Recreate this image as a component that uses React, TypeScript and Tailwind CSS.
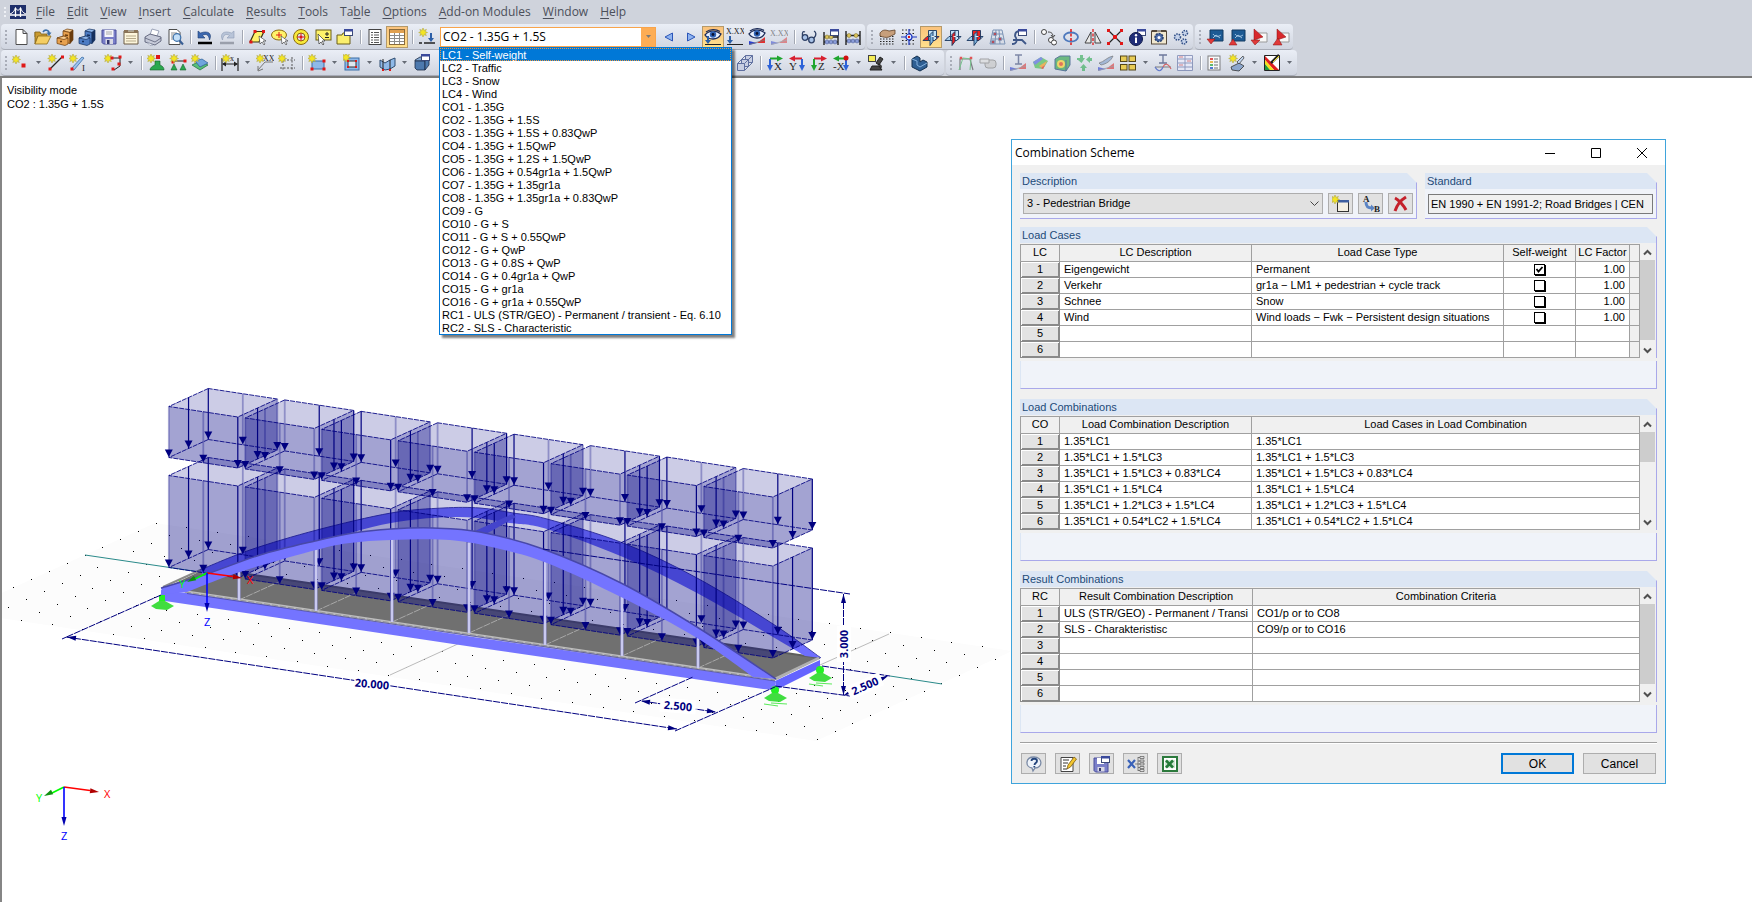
import { useState } from 'react'
import type { ReactNode } from 'react'

const MENUS: [string, number][] = [
  ['File', 0],
  ['Edit', 0],
  ['View', 0],
  ['Insert', 0],
  ['Calculate', 0],
  ['Results', 0],
  ['Tools', 0],
  ['Table', 2],
  ['Options', 0],
  ['Add-on Modules', 0],
  ['Window', 0],
  ['Help', 0],
]

const LOADINGS = [
  'LC1 - Self-weight',
  'LC2 - Traffic',
  'LC3 - Snow',
  'LC4 - Wind',
  'CO1 - 1.35G',
  'CO2 - 1.35G + 1.5S',
  'CO3 - 1.35G + 1.5S + 0.83QwP',
  'CO4 - 1.35G + 1.5QwP',
  'CO5 - 1.35G + 1.2S + 1.5QwP',
  'CO6 - 1.35G + 0.54gr1a + 1.5QwP',
  'CO7 - 1.35G + 1.35gr1a',
  'CO8 - 1.35G + 1.35gr1a + 0.83QwP',
  'CO9 - G',
  'CO10 - G + S',
  'CO11 - G + S + 0.55QwP',
  'CO12 - G + QwP',
  'CO13 - G + 0.8S + QwP',
  'CO14 - G + 0.4gr1a + QwP',
  'CO15 - G + gr1a',
  'CO16 - G + gr1a + 0.55QwP',
  'RC1 - ULS (STR/GEO) - Permanent / transient - Eq. 6.10',
  'RC2 - SLS - Characteristic',
]

/* ---------- icons ---------- */

const Star = ({ x = 0, y = 0 }: { x?: number; y?: number }) => (
  <g transform={`translate(${x} ${y})`}>
    <path d="M4 0l1 2.4 2.4-1L6.200 3.500 8.500 4.500 6.200 5.300 7.300 7.500 5 6.600 4 9 3 6.600.8 7.500 1.900 5.300-.3 4.500 1.900 3.500.8 1.400 3 2.400z" fill="#f3e522" stroke="#b3a83c" strokeWidth=".6" />
  </g>
)

const Node = ({ x, y, s = 3 }: { x: number; y: number; s?: number }) => (
  <rect x={x - s / 2} y={y - s / 2} width={s} height={s} fill="#e01818" />
)

const Win = ({ x, y }: { x: number; y: number }) => (
  <g>
    <rect x={x + 0.5} y={y + 0.5} width="8" height="6" fill="#fff" stroke="#3b4a78" />
    <rect x={x} y={y} width="9" height="2.500" fill="#3b4a9c" />
  </g>
)

const Glyph = ({ x, y, children, size = 9, fill = '#222' }: { x: number; y: number; children: ReactNode; size?: number; fill?: string }) => (
  <text x={x} y={y} fontSize={size} fill={fill} fontFamily="Liberation Serif, serif">
    {children}
  </text>
)

const Cube = ({ fill, light }: { fill: string; light: string }) => (
  <g stroke="#1c2c48" strokeWidth=".8">
    <path d="M2 6l5-3h9l-4 4H2z" fill={light} />
    <path d="M2 7h10v9H4l-2-2z" fill={fill} />
    <path d="M12 7l4-4v8l-4 5z" fill={fill} />
  </g>
)

const Cabinet = ({ fill, light, dark }: { fill: string; light: string; dark: string }) => (
  <g stroke={dark} strokeWidth=".7">
    <path d="M7 3l4-2 6 1-3 2.500z" fill={light} />
    <path d="M7 3l7 1.500v11L7 14z" fill={fill} />
    <path d="M14 4.500L17 2v10l-3 3.500z" fill={dark} />
    <path d="M1 10l7-2 4 2v6l-3 1.500-8-2z" fill={fill} />
    <path d="M1 10l7-2 4 2-4 1.500z" fill={light} />
    <path d="M9 7l3 .5M4 13.500h2" stroke={dark} strokeWidth="1.300" />
  </g>
)

const Planes = ({ red }: { red: number }) => (
  <g stroke="#17365f" strokeWidth=".9">
    <path d="M6.500 2.500h8v8h-8z" fill={red === 2 ? '#ee2222' : '#c3e2f8'} />
    <path d="M1 12.500l4-4h12l-4 4z" fill={red === 0 ? '#ee2222' : '#a4cdec'} />
    <path d="M6.500 8.500h8v2l-2 2h-6z" fill={red === 2 ? '#ee2222' : '#c3e2f8'} />
    <path d="M8 6.500l3-3v10l-3 4z" fill={red === 1 ? '#ee2222' : '#7fb4de'} />
    <path d="M9.500 8.500h3" stroke="#fff" />
  </g>
)

const Axes = ({ label, a, b, flip }: { label: string; a: string; b: string; flip?: boolean }) => (
  <g>
    <g transform={flip ? 'translate(18 0) scale(-1 1)' : undefined}>
      <path d="M4 4.500h8" stroke={a} strokeWidth="2" />
      <path d="M11 1.500l6 3-6 3z" fill={a} />
      <path d="M4 5v7" stroke={b} strokeWidth="2" />
      <path d="M1 11h6l-3 6z" fill={b} />
    </g>
    <Glyph x={flip ? 1 : 8} y={16} size={11}>{label}</Glyph>
  </g>
)

const Eye = ({ y = 0 }: { y?: number }) => (
  <g transform={`translate(0 ${y})`}>
    <path d="M1 6c4-5 11-5 16-1-2 4-4 5-8 5-3 0-6-1-8-4z" fill="#e8f0ff" stroke="#1c2b58" strokeWidth="1.300" />
    <circle cx="9" cy="5.500" r="3.200" fill="#2f62b5" />
    <circle cx="9" cy="5.500" r="1.400" fill="#0b1230" />
    <path d="M2 3c4-3 10-3 14-.5" fill="none" stroke="#1c2b58" strokeWidth="1.300" />
  </g>
)

const Slope = () => (
  <g>
    <path d="M1 17v-4l8 2z" fill="#2b3fd0" />
    <path d="M9 15l8-6v6z" fill="#e03030" />
    <path d="M1 16.500L17 12" stroke="#777" strokeWidth=".8" />
  </g>
)

const ICONS: Record<string, ReactNode> = {
  New: <path d="M4 1.500h7l4 4v11H4zM11 1.500v4h4" fill="#fff" stroke="#4d4d4d" />,
  Open: (
    <>
      <path d="M1 4h5l1 2h6v3H1z" fill="#c99a2f" stroke="#7d5f16" strokeWidth=".8" />
      <path d="M1 4v12l3-8" fill="#c99a2f" stroke="#7d5f16" strokeWidth=".8" />
      <path d="M1 16L4 8h13l-4 8z" fill="#f5ce63" stroke="#8a6a1a" strokeWidth=".8" />
      <path d="M9 4c2-3 6-2 6 1" fill="none" stroke="#3b6ea8" strokeWidth="1.600" />
      <path d="M12.500 4.500h5L15 8z" fill="#3b6ea8" />
    </>
  ),
  Library: <Cabinet fill="#e8a14e" light="#f9cc8e" dark="#6a3b0c" />,
  'Project manager': <Cabinet fill="#4d7cc4" light="#8fb6ea" dark="#16305f" />,
  Save: (
    <>
      <path d="M2 2h14v14H3.500L2 14.500z" fill="#7a7fc9" stroke="#4a4f9a" />
      <rect x="4.500" y="2" width="9" height="7" fill="#f5f5fa" />
      <path d="M6 4h6M6 6h6" stroke="#aaa" />
      <rect x="5.500" y="11" width="7.500" height="5" fill="#d8d8e4" />
      <rect x="7" y="12" width="2.500" height="4" fill="#33386e" />
    </>
  ),
  Clipboard: (
    <>
      <path d="M2 3h14v13H2z" fill="#fdf6dc" stroke="#6a5a44" />
      <path d="M2 2h4v2h6V2h4v3H2z" fill="#8a7458" />
      <path d="M4 8h10M4 10.500h10M4 13h10" stroke="#b6a98a" />
    </>
  ),
  Print: (
    <>
      <path d="M6 7L8 1l7 2-2 5z" fill="#fff" stroke="#8890a8" strokeWidth=".8" />
      <path d="M1 9l5-3 11 3v4l-6 4L1 14z" fill="#c7cbd9" stroke="#5b6077" strokeWidth=".9" />
      <path d="M1 10l10 4 6-4" fill="none" stroke="#5b6077" strokeWidth=".8" />
      <path d="M3 14l6 3-3 .5z" fill="#fff" stroke="#8890a8" strokeWidth=".6" />
    </>
  ),
  Preview: (
    <>
      <path d="M3 1.500h8l3 3v12H3z" fill="#fff" stroke="#4d4d4d" />
      <path d="M5 5h6M5 7h3M5 9h2M5 11h2" stroke="#8a8a8a" />
      <circle cx="11" cy="9.500" r="3.800" fill="#bcdcf7" fillOpacity=".9" stroke="#3a6ea8" strokeWidth="1.200" />
      <path d="M13.500 12.500l3.500 4" stroke="#3a5f95" strokeWidth="2" />
    </>
  ),
  Undo: (
    <>
      <path d="M2 3v7h7L6.500 7.500C10 5 13 7 13.500 12c3-6-1-10-9-7z" fill="#3c68b0" stroke="#1d3c70" strokeWidth=".6" />
      <path d="M2 15h14" stroke="#000" strokeWidth="2.500" />
    </>
  ),
  Redo: (
    <>
      <path d="M16 3v7H9l2.500-2.500C8 5 5 7 4.500 12c-3-6 1-10 9-7z" fill="#b8c4d8" stroke="#8f9cb5" strokeWidth=".6" />
      <path d="M2 15h14" stroke="#9a9fab" strokeWidth="2.500" />
    </>
  ),
  'Select rhomboid': (
    <>
      <path d="M7 3.500h9L11 14H2z" fill="#fff36a" stroke="#3a3210" strokeWidth="1.200" />
      <Node x={7} y={3.500} /><Node x={15.500} y={3.500} /><Node x={3} y={14} />
      <path d="M11 8l1 8 2-2 2 3 1-1-2-3h3z" fill="#fff" stroke="#333" strokeWidth=".6" />
    </>
  ),
  'Select ellipse': (
    <>
      <ellipse cx="9" cy="7" rx="7.500" ry="5" fill="#fff36a" stroke="#8a6a10" />
      <path d="M9 4v6M6 7h6" stroke="#e01818" />
      <path d="M11 8l1 8 2-2 2 3 1-1-2-3h3z" fill="#fff" stroke="#333" strokeWidth=".6" />
    </>
  ),
  'Select ring': (
    <>
      <circle cx="9" cy="9" r="7.500" fill="#f8e93a" stroke="#8a6a10" />
      <circle cx="9" cy="9" r="4" fill="#dfe3ec" stroke="#8a6a10" />
      <path d="M9 5v8M5 9h8" stroke="#e01818" />
      <Node x={9} y={9} s={2.500} />
    </>
  ),
  'Select add': (
    <>
      <rect x="2" y="2" width="15" height="10" fill="#fff36a" stroke="#6b5f1a" />
      <path d="M11 6h4M13 4v4M11 9.500h4" stroke="#222" />
      <path d="M4 6l1 10 2-2 2 3 1-1-2-3h3z" fill="#fff" stroke="#333" strokeWidth=".7" />
    </>
  ),
  'Select special': (
    <>
      <path d="M1 7h5l1-2h7v11H1z" fill="#fbef6e" stroke="#6b5f1a" />
      <Win x={8} y={1} />
    </>
  ),
  'Table list': (
    <>
      <rect x="3" y="1.500" width="12" height="15" fill="#fff" stroke="#444" />
      <path d="M5 4.500h2M5 7h2M5 9.500h2M5 12h2M5 14.500h2M8 4.500h5M8 7h5M8 9.500h5M8 12h5M8 14.500h5" stroke="#555" strokeWidth="1" />
    </>
  ),
  Tables: (
    <>
      <rect x="1.500" y="1.500" width="15" height="15" fill="#fff" stroke="#8a6b3c" />
      <rect x="2" y="2" width="14" height="3" fill="#e0a050" />
      <path d="M2 7.500h14M2 10.500h14M2 13.500h14M6.500 5v11M11.500 5v11" stroke="#8b8b8b" />
    </>
  ),
  'New load': (
    <>
      <Star x={1} />
      <path d="M13 5v6" stroke="#2b5ea8" strokeWidth="2" />
      <path d="M10 10h6l-3 4z" fill="#2b5ea8" />
      <path d="M1 15h3M6 15h11" stroke="#222" strokeWidth="1.500" />
    </>
  ),
  Previous: <path d="M12.500 5v8L5 9z" fill="#8fb4f0" stroke="#2b55b8" />,
  Next: <path d="M5.500 5v8L13 9z" fill="#8fb4f0" stroke="#2b55b8" />,
  'Show loads': (
    <>
      <Eye y={1} />
      <path d="M4 8v6" stroke="#2b5ea8" strokeWidth="2" />
      <path d="M1 12h6l-3 4z" fill="#2b5ea8" />
      <path d="M1 16.500h16" stroke="#222" />
    </>
  ),
  'Show load values': (
    <>
      <Glyph x={0} y={6} size={8}>X.XX</Glyph>
      <path d="M4 8v6" stroke="#2b5ea8" strokeWidth="2" />
      <path d="M1 12h6l-3 4z" fill="#2b5ea8" />
      <path d="M1 16.500h16" stroke="#222" />
    </>
  ),
  'Show results': <><Eye /><Slope /></>,
  'Show result values': <g opacity=".5"><Glyph x={0} y={8} size={8}>X.XX</Glyph><Slope /></g>,
  Glasses: (
    <g fill="#a9c3e8" stroke="#2e4066" strokeWidth="1.300">
      <circle cx="5" cy="9.500" r="2.800" /><circle cx="11.500" cy="12" r="2.800" />
      <path d="M2.500 8C2 4 3 3 5 4M14 10c3-3 2-6 0-7M7.500 10.500l1.500.5" fill="none" />
    </g>
  ),
  'Abacus window': (
    <>
      <path d="M2 4v13M16 4v13M2 9h14M2 14h14" stroke="#222" strokeWidth="1.400" />
      <g fill="#d9c25c" stroke="#75651e" strokeWidth=".5"><circle cx="5" cy="9" r="2" /><circle cx="9" cy="9" r="2" /></g>
      <g fill="#8a9cd8" stroke="#44558f" strokeWidth=".5"><circle cx="5" cy="14" r="2" /><circle cx="9" cy="14" r="2" /><circle cx="13" cy="14" r="2" /></g>
      <Win x={8} y={1} />
    </>
  ),
  Abacus: (
    <>
      <path d="M2 3v14M16 3v14M2 7.500h14M2 13h14" stroke="#222" strokeWidth="1.400" />
      <g fill="#d9c25c" stroke="#75651e" strokeWidth=".5"><circle cx="5" cy="7.500" r="2" /><circle cx="12" cy="7.500" r="2" /></g>
      <g fill="#8a9cd8" stroke="#44558f" strokeWidth=".5"><circle cx="5" cy="13" r="2" /><circle cx="9" cy="13" r="2" /><circle cx="13" cy="13" r="2" /></g>
    </>
  ),
  'Move grid': (
    <>
      <path d="M2 8.500h14M2 11h14M2 13.500h14M2 16h14" stroke="#222" strokeWidth="1" strokeDasharray="1.500 1.500" />
      <path d="M2 5c3-4 6-3 9-2l6-1v4l-6 3c-3 1-6 0-9-1z" fill="#c79f7b" stroke="#5f4229" strokeWidth=".8" />
    </>
  ),
  Snap: (
    <>
      <path d="M2 2h14M2 5.500h14M2 12.500h14M2 16h14" stroke="#222" strokeDasharray="1.500 2" />
      <path d="M9 1v16M1 9h16" stroke="#1a35c0" strokeWidth="1.200" />
      <circle cx="9" cy="9" r="3" fill="#dfe6fa" stroke="#1a35c0" strokeWidth="1.200" />
      <Node x={9} y={9} s={2} />
    </>
  ),
  'Plane XY': <Planes red={0} />,
  'Plane YZ': <Planes red={1} />,
  'Plane XZ': <Planes red={2} />,
  'Plane grid': (
    <g fill="none" stroke="#7b93b5">
      <path d="M5 2h9l3 14H2zM8 2L7 16M11 2l1 14M4 6h11M3 11h13" />
      <Node x={7} y={6} s={2.500} /><Node x={12} y={11} s={2.500} /><Node x={5} y={14} s={2.500} />
    </g>
  ),
  'Guide window': (
    <>
      <path d="M2 16c6 0 5-5 3-8 0-4 3-5 5-5M3 12h9l4 4" fill="none" stroke="#3e5788" strokeWidth="1.800" />
      <Win x={8} y={1} />
    </>
  ),
  Copy: (
    <g fill="#fff" stroke="#444">
      <circle cx="4" cy="4" r="2.500" /><circle cx="11" cy="12" r="2.500" /><circle cx="14" cy="14.500" r="2.500" />
      <path d="M8 4c4 0 5 2 5 5M11 7l2 2.500L15 7" fill="none" />
    </g>
  ),
  Rotate: (
    <>
      <ellipse cx="9" cy="9" rx="7" ry="4.500" fill="none" stroke="#4e79bd" strokeWidth="1.800" />
      <path d="M9 1v16" stroke="#e01818" strokeWidth="1.500" strokeDasharray="3 1.500" />
    </>
  ),
  Mirror: (
    <>
      <path d="M7 4v11H1zM11 4v11h6z" fill="#e9e9e9" stroke="#444" />
      <path d="M9 1v16" stroke="#e01818" strokeWidth="1.300" strokeDasharray="3 1.500" />
    </>
  ),
  Divide: (
    <>
      <path d="M2 2l14 14M16 2L2 16" stroke="#222" strokeWidth="1.200" />
      <Node x={2.500} y={2.500} /><Node x={15.500} y={2.500} /><Node x={2.500} y={15.500} /><Node x={15.500} y={15.500} /><Node x={9} y={9} s={4} />
    </>
  ),
  Info: (
    <>
      <Win x={9} y={1} />
      <circle cx="8" cy="11" r="6.500" fill="#1f2d78" stroke="#0f1a4a" />
      <path d="M8 9.500V15" stroke="#fff" strokeWidth="2" /><circle cx="8" cy="7.200" r="1.200" fill="#fff" />
    </>
  ),
  Settings: (
    <>
      <rect x="1.500" y="3" width="15" height="13" fill="#f1e8cf" stroke="#54493a" />
      <path d="M2 2h5v2H2zM11 2h5v2h-5z" fill="#54493a" />
      <circle cx="9" cy="9.500" r="4" fill="#4a6aa8" stroke="#27406f" strokeDasharray="2 1" strokeWidth="1.500" /><circle cx="9" cy="9.500" r="1.500" fill="#fff" />
    </>
  ),
  Gears: (
    <g fill="#c6d3ea" stroke="#2f4d85" strokeDasharray="1.500 1" strokeWidth="1.500">
      <circle cx="5.500" cy="9" r="3" /><circle cx="13" cy="5" r="2.500" /><circle cx="12" cy="13.500" r="2.500" />
    </g>
  ),
  'View down': <><path d="M4 2h13v11H4z" fill="#1d5a94" stroke="#123a62" /><path d="M7 6c2 3 5 3 8 1M7 10l3-3 4 3" fill="none" stroke="#bcd9f2" strokeWidth=".8" /><path d="M1 11h8l-4 5z" fill="#e03a3a" stroke="#8a1212" strokeWidth=".5" /></>,
  'View up': <><path d="M4 2h13v11H4z" fill="#1d5a94" stroke="#123a62" /><path d="M7 6c2 3 5 3 8 1M7 10l3-3 4 3" fill="none" stroke="#bcd9f2" strokeWidth=".8" /><path d="M1 17h8l-4-6z" fill="#e03a3a" stroke="#8a1212" strokeWidth=".5" /></>,
  'Pdf down': <><path d="M7 5h10v9H7z" fill="#f8f8f8" stroke="#999" /><path d="M4 1l9 8-9 3z" fill="#d8282c" stroke="#8a1212" strokeWidth=".5" /><path d="M1 12h9l-5 5z" fill="#e03a3a" stroke="#8a1212" strokeWidth=".5" /></>,
  'Pdf up': <><path d="M7 5h10v9H7z" fill="#f8f8f8" stroke="#999" /><path d="M5 1l9 8-9 3z" fill="#d8282c" stroke="#8a1212" strokeWidth=".5" /><path d="M1 17h9l-4-7z" fill="#e03a3a" stroke="#8a1212" strokeWidth=".5" /></>,

  'New node': <><Star x={0} y={1} /><Node x={11.500} y={11.500} s={4} /></>,
  'New line': <><path d="M3 15L15 3" stroke="#222" strokeWidth="1.300" /><Star x={1} /><Node x={3} y={15} /><Node x={15.500} y={3} /></>,
  'New member': <><path d="M2 15L13 3l2 1L5 16z" fill="#9cc3ee" stroke="#3b6ea8" strokeWidth=".8" /><Star x={0} /><Node x={3} y={15} /><Glyph x={13} y={17}>I</Glyph></>,
  'New polyline': <><path d="M8 4h8v8l-6 4" fill="none" stroke="#222" /><Star /><Node x={8} y={4} /><Node x={16} y={3} /><Node x={15} y={10} /><Node x={9} y={15} /></>,
  'Nodal support': <><Node x={11} y={3} s={4} /><path d="M8 7h5v4c3 1 4 3 4 5H3c0-2 2-4 5-5z" fill="#2aa84f" stroke="#14602a" strokeWidth=".6" /><Star /></>,
  'Line support': <><path d="M4 7h12" stroke="#222" /><Node x={4} y={8} /><Node x={16} y={7} /><path d="M5 10l3 6H2zM14 10l3 6h-6z" fill="#2aa84f" stroke="#14602a" strokeWidth=".6" /><Star x={1} /></>,
  'Surface support': <><path d="M1 11l8-4 8 4-8 5z" fill="#56c07a" stroke="#1c6f39" strokeWidth=".7" /><path d="M4 7l7-2 6 4-8 4z" fill="#6fa5de" stroke="#2a5c94" strokeWidth=".7" /><Star /></>,
  Dimension: <><path d="M1 4v13M17 4v13M2 10h14" stroke="#222" strokeWidth="1.200" /><path d="M1 10l4-2.500v5zM17 10l-4-2.500v5z" fill="#222" /><Glyph x={9} y={7} size={8}>x</Glyph><Star x={1} y={0} /></>,
  Comment: <><path d="M17 8H9l-7 8M2 12v5l5-2" fill="none" stroke="#777" /><Glyph x={7} y={7} size={8}>XX</Glyph><Star x={0} /></>,
  'Guide lines': <><path d="M5 3v14M14 3v14M2 6h15M2 14h15" fill="none" stroke="#555" strokeDasharray="2 1.500" /><Star /></>,
  'New surface': <><rect x="4" y="7" width="12" height="8" fill="#8fb9e8" stroke="#3b6ea8" /><Star /><Node x={4} y={15} /><Node x={16} y={15} /><Node x={16} y={7} /></>,
  Opening: <><rect x="2" y="4" width="14" height="12" fill="#8fb9e8" stroke="#3b6ea8" /><rect x="5" y="7" width="8" height="6" fill="#dfe6f0" stroke="#333" /><Star x={-1} y={-1} /><Node x={5} y={7} s={2} /><Node x={13} y={7} s={2} /><Node x={5} y={13} s={2} /><Node x={13} y={13} s={2} /></>,
  'Result surface': <><path d="M2 6l5 3 5-3 5-2v8l-5 3-5 1-5-3z" fill="#8fb9e8" stroke="#2f4d70" /><path d="M5 5v10M12 6v9" stroke="#222" /><Node x={5} y={16} s={2} /><Node x={12} y={16} s={2} /></>,
  Solid: <><Cube fill="#4d79ae" light="#86aad3" /><Win x={8} y={0} /></>,
  Isometric: (
    <g fill="#c8cfe3" stroke="#6070a0">
      <path d="M9.500 1.500h7v7h-7z" />
      <path d="M5.500 5.500h7v7h-7z" />
      <path d="M1.500 9.500h7v7h-7z" />
      <path d="M1.500 9.500l8-8M8.500 9.500l8-8M8.500 16.500l8-8" fill="none" />
    </g>
  ),
  'View X': <Axes label="X" a="#1fa62f" b="#2c62d8" />,
  'View Y': <Axes label="Y" a="#d82030" b="#2c62d8" flip />,
  'View Z': <Axes label="Z" a="#d82030" b="#1fa62f" />,
  'View -X': <><Axes label="-X" a="#1fa62f" b="#2c62d8" flip /><circle cx="14" cy="4" r="2.500" fill="#d01010" /></>,
  Rendering: <><rect x="1.500" y="1.500" width="7" height="6" fill="#f6ee57" stroke="#444" /><path d="M13 3l3 2-4 6-3-2zM5 12h7l3 4H3zM11 10c4 0 4 4 2 5" fill="#444" stroke="#222" /></>,
  Clipping: <><path d="M2 5l5-3 3 2v4l3-2 4 2v5l-7 4-8-4z" fill="#2f5f93" stroke="#14304f" /><path d="M2 5l5 2v4l3 2 7-4" fill="none" stroke="#86b2de" /></>,
  Deformation: <g opacity=".7"><path d="M3 16V5h10l3 11" fill="none" stroke="#555" strokeWidth="1.200" /><path d="M2 16L6 4l8 1-1 11" fill="none" stroke="#4fb868" /><Node x={4} y={4} s={2.500} /><Node x={14} y={4} s={2.500} /></g>,
  Stress: <g opacity=".7"><rect x="6" y="6" width="11" height="8" rx="3" fill="#c9c9c9" stroke="#888" /><path d="M1 5h9v4H1z" fill="#ddd" stroke="#888" /></g>,
  Internal: <g opacity=".6"><Slope /><path d="M6 1h7M9.500 1v9M6 10h7" stroke="#3b4a78" strokeWidth="1.500" /></g>,
  'Surface results': <g opacity=".8"><path d="M2 8l8-5 7 4-5 8-8-1z" fill="#62c56b" /><path d="M2 8l8-5 2 2-8 6z" fill="#6b7ce0" /><path d="M8 12l8-5-4 8z" fill="#f0a53c" /><path d="M10 14l4-3-2 4z" fill="#e04545" /></g>,
  'Solid results': <g opacity=".8"><path d="M2 5l5-3h10v9l-4 6-11-2z" fill="#4fae66" stroke="#3b5d88" /><circle cx="8" cy="10" r="4" fill="#f3d34a" /><circle cx="8" cy="10" r="2" fill="#e25a3a" /><path d="M13 6v11" stroke="#3b5d88" /></g>,
  Reactions: <g opacity=".6" fill="#2aa84f"><path d="M7 17v-3H5l3.500-4 3.500 4h-2v3zM17 7h-2v2l-4-3.500L15 2v2h2zM2 4h3V1h3v3h2L6.500 9 3 6H2z" /></g>,
  Sections: <g opacity=".6"><path d="M2 9c5-1 8-6 14-7-2 5-7 8-12 9z" fill="#7d9cc8" stroke="#333" strokeWidth=".7" /><Slope /></g>,
  Windows: (
    <g fill="#e8cc55" stroke="#54471a">
      <rect x="1.500" y="2" width="6.500" height="5.500" /><rect x="10" y="2" width="6.500" height="5.500" />
      <rect x="1.500" y="10.500" width="6.500" height="5.500" /><rect x="10" y="10.500" width="6.500" height="5.500" />
    </g>
  ),
  'Beam results': <g opacity=".7"><path d="M5 1h8M9 1v8M5 9h8" stroke="#3b4a78" strokeWidth="1.300" /><path d="M1 13h16" stroke="#555" /><path d="M1 13c3 5 6 5 8 0" fill="none" stroke="#3050c0" strokeWidth="1.200" /><path d="M9 13c2-4 5-4 8 2" fill="none" stroke="#d03030" strokeWidth="1.200" /></g>,
  'Result table': <g opacity=".6"><path d="M1.500 1.500h15v15h-15zM9 1v16M1 5h16M1 9h16M1 13h16" fill="#eef" stroke="#5b6ba0" /><path d="M3 3h4M11 7h4M3 11h4" stroke="#d04040" /></g>,
  Legend: <g opacity=".8"><rect x="2" y="2" width="12" height="14" fill="#fff" stroke="#666" /><path d="M4 5h3" stroke="#e03030" strokeWidth="2" /><path d="M4 8h3" stroke="#f0b030" strokeWidth="2" /><path d="M4 11h3" stroke="#40b050" strokeWidth="2" /><path d="M4 14h3" stroke="#3060d0" strokeWidth="2" /><path d="M8 5h4M8 8h4M8 11h4M8 14h4" stroke="#555" /></g>,
  'Smooth results': <><path d="M3 13l8-4 5 3-5 5-7-1z" fill="#8ca6cc" stroke="#333" strokeWidth=".8" /><path d="M9 8l6-6 1 2-5 6z" fill="#c0d4ee" stroke="#333" strokeWidth=".7" /><Star x={1} /></>,
  'Color scale': (
    <>
      <path d="M1.500 1.500h15v15h-15z" fill="#fff" stroke="#222" />
      <path d="M2 2l14 14h-5L2 6z" fill="#e02020" />
      <path d="M2 6l9 10H7l-5-6z" fill="#f4e11b" />
      <path d="M2 10l5 6H2z" fill="#1f9a3a" />
      <path d="M8 9l8-8" stroke="#222" strokeWidth="2.500" /><path d="M10 8l6-6" stroke="#f4e11b" />
    </>
  ),

  Help: <><path d="M9 2c9 0 9 11 1 11l-2 3-1-3C0 12 0 2 9 2z" fill="#eef3fa" stroke="#7a8aa5" strokeWidth="1.300" /><path d="M6.500 6c0-3 5.500-3 5.500 0 0 2-2.500 2-2.500 4M9.300 11v1.500" fill="none" stroke="#24457c" strokeWidth="1.800" /></>,
  'Edit comment': <><path d="M2 2.500h12v14H2z" fill="#fff" stroke="#444" /><path d="M4 5h6M4 8h5M4 11h3M4 14h4" stroke="#333" /><path d="M8 14l1-4 6-8 2.500 2-6 8z" fill="#f3c62f" stroke="#7a5a10" strokeWidth=".8" /></>,
  'Save as': <><path d="M1 3h14v14H2.500L1 15.500z" fill="#7a7fc9" stroke="#4a4f9a" /><rect x="4" y="3" width="7" height="6" fill="#fff" /><rect x="4.500" y="12" width="7" height="4.500" fill="#d8d8e4" /><rect x="6" y="13" width="2" height="3" fill="#33386e" /><Win x={8} y={1} /></>,
  Expand: <><path d="M1 5l7 8M8 5l-7 8" stroke="#3a62b8" strokeWidth="2.200" /><path d="M8 9h3M11 2v14M11 2.500h2M11 6h2M11 9h2M11 12.500h2M11 15.500h2M13 1.500h4v2h-4zM13 5h4v2h-4zM13 8h4v2h-4zM13 11.500h4v2h-4zM13 14.500h4v2h-4z" fill="none" stroke="#444" strokeWidth=".6" /></>,
  Excel: (
    <>
      <rect x="2" y="2" width="14" height="14" fill="#fff" stroke="#2c7a3d" strokeWidth="2" />
      <rect x="4" y="5" width="10" height="8" fill="#cfe6d3" />
      <path d="M5 5.500l7 7M12 5.500l-7 7" stroke="#237a38" strokeWidth="2.600" />
    </>
  ),
  'New scheme': <><rect x="5.500" y="5.500" width="11" height="11" fill="#f4efe2" stroke="#333" /><rect x="6" y="5" width="11" height="2.500" fill="#3f5f9e" /><Star x={-1} /></>,
  Rename: <><Glyph x={1} y={7} size={9}><tspan fontWeight="bold">A</tspan></Glyph><path d="M4 7c0 5 2 6 6 6" fill="none" stroke="#5b84c4" strokeWidth="3" /><path d="M9 9.500l4 3.500-4 3.500z" fill="#5b84c4" /><Glyph x={12} y={17} size={9}><tspan fontWeight="bold">B</tspan></Glyph></>,
  Delete: <path d="M3 3c4 2 9 8 11 12M14 2C9 5 5 10 3 16" fill="none" stroke="#c4202a" strokeWidth="3" />,
}

const Icon = ({ name }: { name: string }) => (
  <svg viewBox="0 0 18 18" className="w-[18px] h-[18px] shrink-0" aria-hidden="true">
    {ICONS[name]}
  </svg>
)

/* ---------- toolbars ---------- */

type ToolItem = { icon: string; active?: boolean; menu?: boolean } | '|'

const t = (icon: string): ToolItem => ({ icon })
const m = (icon: string): ToolItem => ({ icon, menu: true })
const on = (icon: string): ToolItem => ({ icon, active: true })

const FILE_TOOLS: ToolItem[] = [
  t('New'), t('Open'), t('Library'), t('Project manager'), t('Save'), t('Clipboard'), t('Print'), t('Preview'), '|',
  t('Undo'), t('Redo'), '|',
  t('Select rhomboid'), t('Select ellipse'), t('Select ring'), t('Select add'), t('Select special'), '|',
  t('Table list'), on('Tables'), '|',
  t('New load'),
]
const LOAD_TOOLS: ToolItem[] = [
  t('Previous'), t('Next'), on('Show loads'), t('Show load values'), t('Show results'), t('Show result values'), '|',
  t('Glasses'), t('Abacus window'), t('Abacus'),
]
const PLANE_TOOLS: ToolItem[] = [
  t('Move grid'), t('Snap'), on('Plane XY'), t('Plane YZ'), t('Plane XZ'), t('Plane grid'), t('Guide window'), '|',
  t('Copy'), t('Rotate'), t('Mirror'), t('Divide'), t('Info'), t('Settings'), t('Gears'),
]
const EXPORT_TOOLS: ToolItem[] = [t('View down'), t('View up'), t('Pdf down'), t('Pdf up')]
const INSERT_TOOLS: ToolItem[] = [
  m('New node'), t('New line'), m('New member'), m('New polyline'), '|',
  t('Nodal support'), t('Line support'), t('Surface support'), '|',
  m('Dimension'), t('Comment'), t('Guide lines'), '|',
  m('New surface'), m('Opening'), m('Result surface'), t('Solid'),
]
const VIEW_TOOLS: ToolItem[] = [
  t('Isometric'), '|', t('View X'), t('View Y'), t('View Z'), m('View -X'), m('Rendering'), '|', m('Clipping'),
]
const RESULT_TOOLS: ToolItem[] = [
  t('Deformation'), t('Stress'), '|',
  t('Internal'), t('Surface results'), t('Solid results'), t('Reactions'), t('Sections'), m('Windows'), t('Beam results'), t('Result table'), '|',
  t('Legend'), m('Smooth results'), m('Color scale'),
]

function Tools({ items }: { items: ToolItem[] }) {
  return (
    <>
      {items.map((item, i) =>
        item === '|' ? (
          <span key={i} className="w-2 flex justify-center shrink-0">
            <span className="w-px h-[14px] bg-[#a3a8b3] shadow-[1px_0_0_#fff]" />
          </span>
        ) : (
          <span key={i} className="flex items-center shrink-0">
            <button
              type="button"
              aria-label={item.icon}
              className={`w-[22px] h-[22px] flex items-center justify-center ${
                item.active ? 'bg-linear-to-b from-[#fbc27c] to-[#ffe08c] border border-[#b59a6a]' : ''
              }`}
            >
              <Icon name={item.icon} />
            </button>
            {item.menu && (
              <button type="button" aria-label={`${item.icon} options`} className="w-[13px] h-[22px] flex items-center justify-center">
                <svg viewBox="0 0 5 3" className="w-[5px] h-[3px]" aria-hidden="true">
                  <path d="M0 0h5L2.500 3z" fill="#666b75" />
                </svg>
              </button>
            )}
          </span>
        ),
      )}
    </>
  )
}

function Bar({ children }: { children: ReactNode }) {
  return (
    <div className="h-[26px] pl-1 pr-px flex items-center shrink-0 rounded-sm bg-linear-to-b from-[#eaeef6] to-[#d0d5e0] border-b border-[#a7abb6]">
      <span className="w-[5px] flex flex-col gap-[2px] shrink-0">
        {[0, 1, 2, 3].map((n) => (
          <span key={n} className="w-[2px] h-[2px] bg-[#a9adb8]" />
        ))}
      </span>
      {children}
    </div>
  )
}

/* ---------- load selector ---------- */

function LoadSelector() {
  const [value, setValue] = useState('CO2 - 1.35G + 1.5S')
  return (
    <div className="relative w-[216px] mx-[2px] shrink-0">
      <div className="h-5 flex border border-[#f8a44c] bg-white">
        <input
          aria-label="Current loading"
          value={value}
          onChange={(e) => setValue(e.target.value)}
          className="flex-1 min-w-0 px-[2px] text-[12px] font-['Open_Sans',sans-serif] outline-none text-black"
        />
        <button type="button" aria-label="Open list" className="w-[14px] flex items-center justify-center bg-[#fdad55]">
          <svg viewBox="0 0 5 3" className="w-[5px] h-[3px]" aria-hidden="true">
            <path d="M0 0h5L2.500 3z" fill="#7a7a7a" />
          </svg>
        </button>
      </div>
      <ul
        role="listbox"
        aria-label="Loadings"
        className="absolute z-20 top-[20px] -left-px w-[293px] bg-white border border-[#0078d7] shadow-[3px_3px_2px_rgba(0,0,0,0.5)]"
      >
        {LOADINGS.map((item, i) => (
          <li
            key={item}
            role="option"
            aria-selected={i === 0}
            onClick={() => setValue(item)}
            className={`h-[13px] px-[2px] leading-[14px] whitespace-nowrap ${
              i === 0 ? 'bg-[#0078d7] text-white outline-1 outline-dotted -outline-offset-1 outline-[#f0963c]' : ''
            }`}
          >
            {item}
          </li>
        ))}
      </ul>
    </div>
  )
}

/* ---------- 3D model ---------- */

type Pt = [number, number]

const NAVY = '#000080'
const STEP: Pt = [76.43, 11.43]

// Catmull-Rom spline through the given points
function spline(pts: Pt[], start = 'M') {
  let d = `${start}${pts[0][0]} ${pts[0][1]}`
  for (let i = 0; i < pts.length - 1; i++) {
    const p0 = pts[Math.max(i - 1, 0)]
    const p1 = pts[i]
    const p2 = pts[i + 1]
    const p3 = pts[Math.min(i + 2, pts.length - 1)]
    d += `C${p1[0] + (p2[0] - p0[0]) / 6} ${p1[1] + (p2[1] - p0[1]) / 6} ${p2[0] - (p3[0] - p1[0]) / 6} ${p2[1] - (p3[1] - p1[1]) / 6} ${p2[0]} ${p2[1]}`
  }
  return d
}

const FRONT_OUTER: Pt[] = [[161, 588], [207, 574], [260, 555], [315, 541], [353, 533], [391, 529], [433, 528], [480, 532], [543, 549], [623, 584], [697, 627], [776, 679]]
const FRONT_INNER: Pt[] = [[753, 677], [697, 638], [623, 598], [547, 563], [500, 549], [450, 540], [391, 540], [350, 543], [316, 550], [240, 572], [187, 592]]
const BACK_OUTER: Pt[] = [[200, 570], [250, 550], [317, 530], [391, 513], [443, 508], [480, 508], [513, 513], [547, 519], [623, 543], [697, 578], [773, 624], [821, 658]]
const BACK_INNER: Pt[] = [[805, 656], [773, 637], [697, 593], [623, 557], [547, 529], [510, 523], [460, 517], [391, 523], [317, 543], [267, 560], [205, 578]]

const HANGERS: [number, number, number][] = [
  [239, 571, 600], [316, 550, 611], [392, 540, 622], [469, 543, 633], [545, 561, 645], [622, 597, 656], [698, 638, 668],
]

function LoadBox({ x, y, h, odd }: { x: number; y: number; h: number; odd: boolean }) {
  const a: Pt = [x, y]
  const b: Pt = [x - 39.5, y + 18]
  const c: Pt = [x + 29.5, y + 28.500]
  const d: Pt = [x + 69, y + 10.500]
  const mid = (p: Pt, q: Pt): Pt => [(p[0] + q[0]) / 2, (p[1] + q[1]) / 2]
  const wall = (p: Pt, q: Pt) => `M${p[0]} ${p[1]}L${q[0]} ${q[1]}v${h}L${p[0]} ${p[1] + h}z`
  const ring = (dy: number) => `M${a[0]} ${a[1] + dy}L${b[0]} ${b[1] + dy} ${c[0]} ${c[1] + dy} ${d[0]} ${d[1] + dy}z`
  const arrows: [Pt, boolean][] = [
    [a, !odd], [b, false], [c, !odd], [d, odd],
    [mid(a, b), !odd], [mid(b, c), false], [mid(a, d), odd], [mid(c, d), true],
  ]
  return (
    <g>
      <g fill={NAVY} fillOpacity=".2">
        <path d={wall(a, d)} />
        <path d={wall(a, b)} />
        <path d={ring(h)} />
        <path d={wall(b, c)} />
        <path d={wall(c, d)} />
      </g>
      <path d={`${ring(0)}${ring(h)}`} fill="none" stroke={NAVY} strokeWidth="1" strokeDasharray="5 1" strokeOpacity=".85" />
      {arrows.map(([p, strong], i) => (
        <g key={i}>
          <path d={`M${p[0]} ${p[1]}v${h}`} stroke={NAVY} strokeWidth={strong ? 1.2 : 1.8} strokeOpacity={strong ? 1 : 0.3} />
          <path d={`M${p[0] - 4} ${p[1] + h - 8}h8l-4 7.500z`} fill={NAVY} />
        </g>
      ))}
    </g>
  )
}

function Arrow({ x, y, angle, color = NAVY }: { x: number; y: number; angle: number; color?: string }) {
  return <path d="M0 0l-9-2.500v5z" fill={color} transform={`translate(${x} ${y}) rotate(${angle})`} />
}

function DimLabel({ x, y, angle, children }: { x: number; y: number; angle: number; children: string }) {
  return (
    <g transform={`translate(${x} ${y}) rotate(${angle})`}>
      <rect x="-18" y="-7" width="36" height="14" fill="#fff" />
      <text y="4" textAnchor="middle" fontSize="11" fontWeight="bold" fill={NAVY} className="font-['Open_Sans',sans-serif]">
        {children}
      </text>
    </g>
  )
}

function AxisTripod({ x, y }: { x: number; y: number }) {
  return (
    <g transform={`translate(${x} ${y})`} fontSize="11" className="font-['Open_Sans',sans-serif]">
      <path d="M0 0L26 3.500" stroke="#f00" strokeWidth="1.600" />
      <Arrow x={35} y={5} angle={8} color="#b00000" />
      <path d="M0 0L-12 6" stroke="#0f0" strokeWidth="1.600" />
      <Arrow x={-20} y={9} angle={154} color="#109010" />
      <path d="M0 0V30" stroke="#00f" strokeWidth="1.600" />
      <Arrow x={0} y={39} angle={90} color="#0000b0" />
      <text x="40" y="11" fill="#f00">X</text>
      <text x="-28" y="15" fill="#0f0">Y</text>
      <text x="-3" y="53" fill="#00f">Z</text>
    </g>
  )
}

function Support({ x, y, lines }: { x: number; y: number; lines?: boolean }) {
  return (
    <g transform={`translate(${x} ${y})`}>
      {lines ? <circle cx="0" cy="3" r="4" fill="#24f024" /> : <path d="M-3 0h6v7h-6z" fill="#24f024" />}
      <path d="M-3 6L-11 11l5 3 11 1 7-4-9-5z" fill="#40dd40" />
      {lines && <path d="M-11 17l14 2M-4 16l16 1" stroke="#5bea5b" strokeWidth="1.200" />}
    </g>
  )
}

function Model() {
  const columns = Array.from({ length: 8 }, (_, i) => i)
  const dots: Pt[] = []
  for (let i = -4; i <= 24; i++) {
    for (let j = -4; j <= 7; j++) dots.push([207 + 30.6 * i - 17.8 * j, 573 + 4.57 * i + 8 * j])
  }
  return (
    <svg viewBox="0 78 1010 790" className="block w-[1010px] h-[790px] shrink-0" role="img" aria-label="Bridge model with snow load">
      <path d="M155 523L1012 651 816 741-40 612z" fill="#fcfcfc" />
      {dots.map(([x, y]) => (
        <rect key={`${x},${y}`} x={Math.round(x)} y={Math.round(y)} width="1" height="1" fill="#000" />
      ))}
      <path d="M85 555L207 573M890 676L942 684" stroke="#2a8a8a" strokeWidth="1" />
      <path d="M390 675L460 643M820 665L889 634" stroke="#bbb" strokeWidth="1" />

      {/* deck and cross beams */}
      <path d="M163 589L207 568 820 658 776 680z" fill="#707070" />
      <path d="M163 587L207 567" stroke="#8a8a8a" strokeWidth="2" />
      {HANGERS.map(([x, , y]) => (
        <path key={x} d={`M${x} ${y}l44 -20`} stroke="#a8a8a8" strokeWidth="1" strokeDasharray="7 1" />
      ))}
      <path d="M207 568L820 658" stroke="#5d5d5d" strokeWidth="2" />

      <path d={`${spline(BACK_OUTER)}${spline(BACK_INNER, 'L')}z`} fill="#6e6eff" />
      <path d={spline(BACK_OUTER)} fill="none" stroke="#4040a8" strokeWidth="1" />

      {columns.map((i) => (
        <LoadBox key={`l${i}`} x={208.3 + STEP[0] * i} y={457.500 + STEP[1] * i} h={92} odd={i % 2 === 1} />
      ))}
      {columns.map((i) => (
        <LoadBox key={`u${i}`} x={208.3 + STEP[0] * i} y={388.500 + STEP[1] * i} h={51} odd={i % 2 === 1} />
      ))}

      {/* edge beams */}
      <path d="M185 592L775 680" stroke="#bdbdbd" strokeWidth="3.500" />
      <path d="M185 592L775 680" stroke="#8c8c8c" strokeWidth=".8" strokeDasharray="6 2" />
      <path d="M775 681L820 660V668L776 690z" fill="#6464ff" />
      <path d="M775 679L819 658" stroke="#b0b0b0" strokeWidth="2.500" />
      <path d="M161 590L187 593 480 638 775 681V690L763 689 480 648 165 601 161 597z" fill="#7474ff" />
      <path d="M187 593.500L775 681" stroke="#4a4a9a" strokeWidth=".8" />

      {HANGERS.map(([x, y1, y2]) => (
        <g key={x}>
          <path d={`M${x} ${y1}V${y2}`} stroke="#9c9ce0" strokeWidth="3" />
          <path d={`M${x} ${y1}V${y2}`} stroke="#d8d8f6" strokeWidth="1.500" />
        </g>
      ))}
      <path d="M475 531L512 514l4 3-30 17z" fill="#4444cc" />
      <path d={`${spline(FRONT_OUTER)}${spline(FRONT_INNER, 'L')}L163 594z`} fill="#7474ff" />
      <path d={spline(FRONT_OUTER)} fill="none" stroke="#4848a8" strokeWidth="1.500" />

      <Support x={162} y={595} />
      <Support x={775} y={687} lines />
      <Support x={820} y={667} lines />

      {/* dimensions */}
      <g stroke={NAVY} strokeWidth="1" strokeDasharray="7 1" fill="none">
        <path d="M161 595L62 639M66 637L677 729M675 731L775 687M635 703L693 677M642 701L715 712M543 549L850 594M775 686L850 696M822 666L890 676M843.500 594V695M845 695L887 676" />
      </g>
      <Arrow x={67} y={637} angle={188} />
      <Arrow x={677} y={729} angle={8} />
      <Arrow x={641} y={701} angle={188} />
      <Arrow x={716} y={712} angle={8} />
      <Arrow x={843.500} y={594} angle={-90} />
      <Arrow x={843.500} y={695} angle={90} />
      <Arrow x={844} y={695} angle={156} />
      <Arrow x={888} y={676} angle={-24} />
      <DimLabel x={372} y={684} angle={5}>20.000</DimLabel>
      <DimLabel x={678} y={706} angle={5}>2.500</DimLabel>
      <DimLabel x={844} y={644} angle={-90}>3.000</DimLabel>
      <DimLabel x={865} y={686} angle={-24}>2.500</DimLabel>

      <AxisTripod x={207} y={573} />
      <AxisTripod x={64} y={787} />
    </svg>
  )
}

/* ---------- dialog ---------- */

function GroupTitle({ children }: { children: ReactNode }) {
  return (
    <h2 className="h-4 pl-[2px] leading-4 bg-[#dce6f4] text-[#1d4a78] border-r border-[#a9a8ea] [clip-path:polygon(0_0,calc(100%-10px)_0,100%_10px,100%_100%,0_100%)]">
      {children}
    </h2>
  )
}

function ScrollBar({ thumb }: { thumb: string }) {
  return (
    <div className="w-[15px] flex flex-col bg-[#f0f0f0] shrink-0" aria-hidden="true">
      <svg viewBox="0 0 15 16" className="h-4">
        <path d="M4 10.500l3.500-3.500 3.500 3.500" fill="none" stroke="#505050" strokeWidth="2" />
      </svg>
      <div className={`bg-[#cdcdcd] ${thumb}`} />
      <svg viewBox="0 0 15 16" className="h-4 mt-auto">
        <path d="M4 6.500L7.500 10 11 6.500" fill="none" stroke="#505050" strokeWidth="2" />
      </svg>
    </div>
  )
}

type Col = { title: string; width?: string; align?: string }

function Grid({ title, cols, rows, thumb }: { title: string; cols: Col[]; rows: ReactNode[][]; thumb: string }) {
  return (
    <section>
      <GroupTitle>{title}</GroupTitle>
      <div className="pt-px pr-px flex border-r border-[#a9a8ea]">
        <table className="flex-1 table-fixed border-collapse bg-white" aria-label={title}>
          <thead>
            <tr className="h-[17px]">
              {cols.map((c, i) => (
                <th key={i} className={`p-0 border border-[#a0a0a0] bg-[#f0f0f0] font-normal leading-[14px] align-top ${c.width ?? ''}`}>
                  {c.title}
                </th>
              ))}
            </tr>
          </thead>
          <tbody>
            {Array.from({ length: 6 }, (_, r) => (
              <tr key={r} className="h-4">
                <th className="p-0 border border-[#8a8a8a] bg-[#e3e3e3] font-normal leading-[14px] align-top shadow-[inset_1px_1px_0_#fff,inset_-1px_-1px_0_#8a8a8a]">
                  {r + 1}
                </th>
                {cols.slice(1).map((c, i) => (
                  <td
                    key={i}
                    className={`px-1 py-0 border border-[#a0a0a0] leading-[15px] whitespace-nowrap overflow-hidden ${c.align ?? ''} ${
                      c.title === '' ? 'bg-[#f0f0f0]' : ''
                    }`}
                  >
                    {rows[r]?.[i]}
                  </td>
                ))}
              </tr>
            ))}
          </tbody>
        </table>
        <ScrollBar thumb={thumb} />
      </div>
      <div className="mt-[3px] h-7 bg-[#f0f3f9] border-b border-r border-[#a9a8ea] border-l border-l-[#dce6f4]" />
    </section>
  )
}

function SelfWeight({ label, initial = false }: { label: string; initial?: boolean }) {
  const [checked, setChecked] = useState(initial)
  return (
    <span className="relative flex justify-center">
      <input
        type="checkbox"
        aria-label={label}
        checked={checked}
        onChange={(e) => setChecked(e.target.checked)}
        className="appearance-none w-[11px] h-[11px] border border-black bg-white shadow-[1px_1px_0_#000]"
      />
      {checked && (
        <svg viewBox="0 0 11 11" className="absolute w-[11px] h-[11px] pointer-events-none" aria-hidden="true">
          <path d="M2.500 5l2 2.500L8.500 3" fill="none" stroke="#000" strokeWidth="1.800" />
        </svg>
      )}
    </span>
  )
}

const LOAD_CASES: ReactNode[][] = [
  ['Eigengewicht', 'Permanent', <SelfWeight label="Self-weight LC1" initial />, '1.00'],
  ['Verkehr', 'gr1a − LM1 + pedestrian + cycle track', <SelfWeight label="Self-weight LC2" />, '1.00'],
  ['Schnee', 'Snow', <SelfWeight label="Self-weight LC3" />, '1.00'],
  ['Wind', 'Wind loads − Fwk − Persistent design situations', <SelfWeight label="Self-weight LC4" />, '1.00'],
]

const LOAD_COMBINATIONS = [
  '1.35*LC1',
  '1.35*LC1 + 1.5*LC3',
  '1.35*LC1 + 1.5*LC3 + 0.83*LC4',
  '1.35*LC1 + 1.5*LC4',
  '1.35*LC1 + 1.2*LC3 + 1.5*LC4',
  '1.35*LC1 + 0.54*LC2 + 1.5*LC4',
].map((s) => [s, s])

const RESULT_COMBINATIONS = [
  ['ULS (STR/GEO) - Permanent / Transi', 'CO1/p or to CO8'],
  ['SLS - Charakteristisc', 'CO9/p or to CO16'],
]

function IconButton({ name }: { name: string }) {
  return (
    <button type="button" aria-label={name} className="w-[25px] h-[21px] flex items-center justify-center bg-[#e1e1e1] border border-[#adadad] shrink-0">
      <Icon name={name} />
    </button>
  )
}

function CombinationScheme() {
  return (
    <div role="dialog" aria-label="Combination Scheme" className="absolute z-10 right-[86px] top-[139px] w-[655px] bg-[#f0f0f0] border border-[#3fa4dc]">
      <div className="h-[25px] pl-[3px] flex items-center bg-white">
        <h1 className="flex-1 text-[12px] font-['Open_Sans',sans-serif]">Combination Scheme</h1>
        {[
          ['Minimize', 'M1 6.500h10'],
          ['Maximize', 'M1.500 1.500h9v9h-9z'],
          ['Close', 'M1 1l10 10M11 1L1 11'],
        ].map(([label, d]) => (
          <button key={label} type="button" aria-label={label} className="w-[46px] h-full flex items-center justify-center">
            <svg viewBox="0 0 12 12" className="w-3 h-3" aria-hidden="true">
              <path d={d} fill="none" stroke="#000" />
            </svg>
          </button>
        ))}
      </div>

      <div className="px-2 pt-2 pb-[9px]">
        <div className="flex gap-2 mb-2">
          <section className="flex-1">
            <GroupTitle>Description</GroupTitle>
            <div className="h-[30px] px-[3px] flex items-center gap-[5px] bg-[#f0f3f9] border-b border-r border-[#a9a8ea]">
              <div className="relative flex-1">
                <select aria-label="Description" className="block appearance-none w-full h-[21px] px-[3px] bg-[#e1e1e1] border border-[#adadad]">
                  <option>3 - Pedestrian Bridge</option>
                </select>
                <svg viewBox="0 0 9 6" className="absolute right-[4px] top-[8px] w-[9px] h-[6px] pointer-events-none" aria-hidden="true">
                  <path d="M.5.500l4 4 4-4" fill="none" stroke="#444" />
                </svg>
              </div>
              <IconButton name="New scheme" />
              <IconButton name="Rename" />
              <IconButton name="Delete" />
            </div>
          </section>
          <section className="w-[232px]">
            <GroupTitle>Standard</GroupTitle>
            <div className="h-[30px] px-[3px] flex items-center bg-[#f0f3f9] border-b border-r border-[#a9a8ea]">
              <input
                aria-label="Standard"
                readOnly
                value="EN 1990 + EN 1991-2; Road Bridges | CEN"
                className="w-full h-5 px-[2px] bg-[#f0f0f0] border border-[#7a7a7a]"
              />
            </div>
          </section>
        </div>

        <div className="flex flex-col gap-[10px]">
          <Grid
            title="Load Cases"
            cols={[
              { title: 'LC', width: 'w-[39px]' },
              { title: 'LC Description', width: 'w-[192px]' },
              { title: 'Load Case Type' },
              { title: 'Self-weight', width: 'w-[72px]' },
              { title: 'LC Factor', width: 'w-[54px]', align: 'text-right' },
              { title: '', width: 'w-[10px]' },
            ]}
            rows={LOAD_CASES}
            thumb="h-20"
          />
          <Grid
            title="Load Combinations"
            cols={[
              { title: 'CO', width: 'w-[39px]' },
              { title: 'Load Combination Description', width: 'w-[192px]' },
              { title: 'Load Cases in Load Combination' },
            ]}
            rows={LOAD_COMBINATIONS}
            thumb="h-[30px]"
          />
          <Grid
            title="Result Combinations"
            cols={[
              { title: 'RC', width: 'w-[39px]' },
              { title: 'Result Combination Description', width: 'w-[192px]' },
              { title: 'Combination Criteria' },
            ]}
            rows={RESULT_COMBINATIONS}
            thumb="h-20"
          />
        </div>

        <div className="mt-[9px] pt-[10px] flex items-center border-t border-[#a0a0a0] shadow-[inset_0_1px_0_#fff]">
          <div className="flex-1 flex gap-[9px] pl-px">
            {['Help', 'Edit comment', 'Save as', 'Expand', 'Excel'].map((name) => (
              <IconButton key={name} name={name} />
            ))}
          </div>
          <div className="flex gap-[9px] pr-px text-[12px]">
            <button type="button" className="w-[73px] h-[21px] leading-none bg-[#e1e1e1] border-2 border-[#0078d7]">OK</button>
            <button type="button" className="w-[73px] h-[21px] leading-none bg-[#e1e1e1] border border-[#adadad]">Cancel</button>
          </div>
        </div>
      </div>
    </div>
  )
}

export default function App() {
  return (
    <div className="relative min-h-screen flex flex-col overflow-hidden bg-white text-black text-[11px] font-['Liberation_Sans',Arial,sans-serif]">
      <header className="bg-[#cfd3dc] border-b-2 border-[#7b7b7b]">
        <nav className="h-6 pl-1 flex items-center text-[12px] text-[#4b4f5a] font-['Open_Sans',sans-serif]">
          <span className="w-[6px] flex flex-col gap-[2px]">
            {[0, 1, 2].map((n) => (
              <span key={n} className="w-[2px] h-[2px] bg-[#eef0f5]" />
            ))}
          </span>
          <svg viewBox="0 0 16 14" className="w-4 h-[14px] mr-[10px]" aria-hidden="true">
            <rect width="16" height="14" fill="#1f2f6b" />
            <path d="M0 10h16M5.500 3v9M10.500 3v9" stroke="#fff" strokeWidth="1.300" />
            <path d="M0 9C3 8 4.500 6 5.500 2.500 6.500 6 9.500 6 10.500 2.500 11.500 6 13 8 16 9" fill="none" stroke="#fff" />
          </svg>
          <div className="flex gap-3">
            {MENUS.map(([label, key]) => (
              <a key={label} href="#" className="whitespace-nowrap">
                {label.slice(0, key)}
                <u className="underline-offset-2">{label[key]}</u>
                {label.slice(key + 1)}
              </a>
            ))}
          </div>
        </nav>
        <div className="flex gap-[2px] pl-px">
          <Bar>
            <Tools items={FILE_TOOLS} />
            <LoadSelector />
            <Tools items={LOAD_TOOLS} />
          </Bar>
          <Bar>
            <Tools items={PLANE_TOOLS} />
          </Bar>
          <Bar>
            <Tools items={EXPORT_TOOLS} />
          </Bar>
        </div>
        <div className="flex gap-[2px] pl-px">
          <Bar>
            <Tools items={INSERT_TOOLS} />
            <span className="w-[301px] shrink-0" />
            <Tools items={VIEW_TOOLS} />
          </Bar>
          <Bar>
            <Tools items={RESULT_TOOLS} />
          </Bar>
        </div>
      </header>

      <main className="relative flex-1 flex items-start">
        <Model />
        <div className="absolute inset-y-0 left-0 w-[2px] bg-[#858585]" />
        <p className="absolute left-[7px] top-[5px] leading-[14px]">
          Visibility mode
          <br />
          CO2 : 1.35G + 1.5S
        </p>
      </main>

      <CombinationScheme />
    </div>
  )
}
